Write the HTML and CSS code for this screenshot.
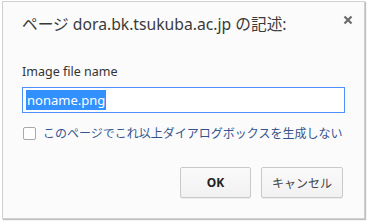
FILE: index.html
```html
<!DOCTYPE html>
<html lang="ja">
<head>
<meta charset="utf-8">
<link rel="stylesheet" href="styles.css">
</head>
<body>
<div class="dialog">
  <div class="header">
    <div class="title">ページ dora.bk.tsukuba.ac.jp の記述:</div>
    <div class="close">
      <svg width="10" height="10" viewBox="0 0 10 10"><path d="M1.5 1.5 L8.5 8.5 M8.5 1.5 L1.5 8.5" stroke="#6b6b6b" stroke-width="2.2" fill="none"/></svg>
    </div>
  </div>
  <div class="label">Image file name</div>
  <div class="input"><span class="sel">noname.png</span></div>
  <div class="check-row">
    <span class="checkbox"></span>
    <span class="check-label">このページでこれ以上ダイアログボックスを生成しない</span>
  </div>
  <div class="buttons">
    <div class="btn btn-ok">OK</div>
    <div class="btn btn-cancel">キャンセル</div>
  </div>
</div>
</body>
</html>
```

FILE: styles.css
```css
html, body {
  margin: 0;
  padding: 0;
  background: #ffffff;
}
body {
  width: 367px;
  height: 222px;
  overflow: hidden;
  font-family: "Noto Sans", "Noto Sans CJK JP", sans-serif;
}
.dialog {
  box-sizing: border-box;
  margin: 1px 0 0 2px;
  width: 363px;
  height: 218px;
  background: #fbfbfb;
  border: 1px solid #d0d0d0;
  box-shadow: 1px 1px 1px rgba(0,0,0,0.25);
  padding: 12px 19px 0 19px;
  display: flex;
  flex-direction: column;
}
.header {
  display: flex;
  justify-content: space-between;
  align-items: flex-start;
  height: 20px;
}
.title {
  font-size: 15.7px;
  line-height: 20px;
  color: #3a3a3a;
}
.close {
  margin-top: 1px;
  margin-right: -8px;
  width: 10px;
  height: 10px;
  display: flex;
}
.label {
  margin-top: 30px;
  font-size: 12.5px;
  line-height: 16px;
  color: #333333;
}
.input {
  margin-top: 7px;
  box-sizing: border-box;
  height: 26px;
  border: 1px solid #4d90fe;
  background: #ffffff;
  display: flex;
  align-items: center;
  padding-left: 3px;
}
.sel {
  background: #3390ff;
  color: #ffffff;
  font-size: 13px;
  line-height: 20px;
  padding: 0 1px;
}
.check-row {
  margin-top: 13px;
  display: flex;
  align-items: center;
  height: 14px;
}
.checkbox {
  box-sizing: border-box;
  width: 13px;
  height: 13px;
  margin-left: 1px;
  border: 1px solid #a9a9a9;
  border-radius: 2px;
  background: #ffffff;
}
.check-label {
  margin-left: 7px;
  font-size: 12px;
  line-height: 14px;
  color: #34548f;
  font-family: "Noto Sans CJK JP", sans-serif;
}
.buttons {
  margin-top: 27px;
  margin-right: 2px;
  display: flex;
  justify-content: flex-end;
  gap: 10px;
}
.btn {
  box-sizing: border-box;
  height: 31px;
  border: 1px solid #c9c9c9;
  border-radius: 2px;
  background: linear-gradient(#fafafa, #f1f1f1);
  box-shadow: 0 1px 0 rgba(0,0,0,0.06);
  display: flex;
  align-items: center;
  justify-content: center;
  font-size: 12px;
  color: #444444;
}
.btn-ok {
  width: 71px;
  font-weight: bold;
  color: #222222;
}
.btn-cancel {
  width: 82px;
  font-family: "Noto Sans CJK JP", sans-serif;
  color: #444444;
}
```
